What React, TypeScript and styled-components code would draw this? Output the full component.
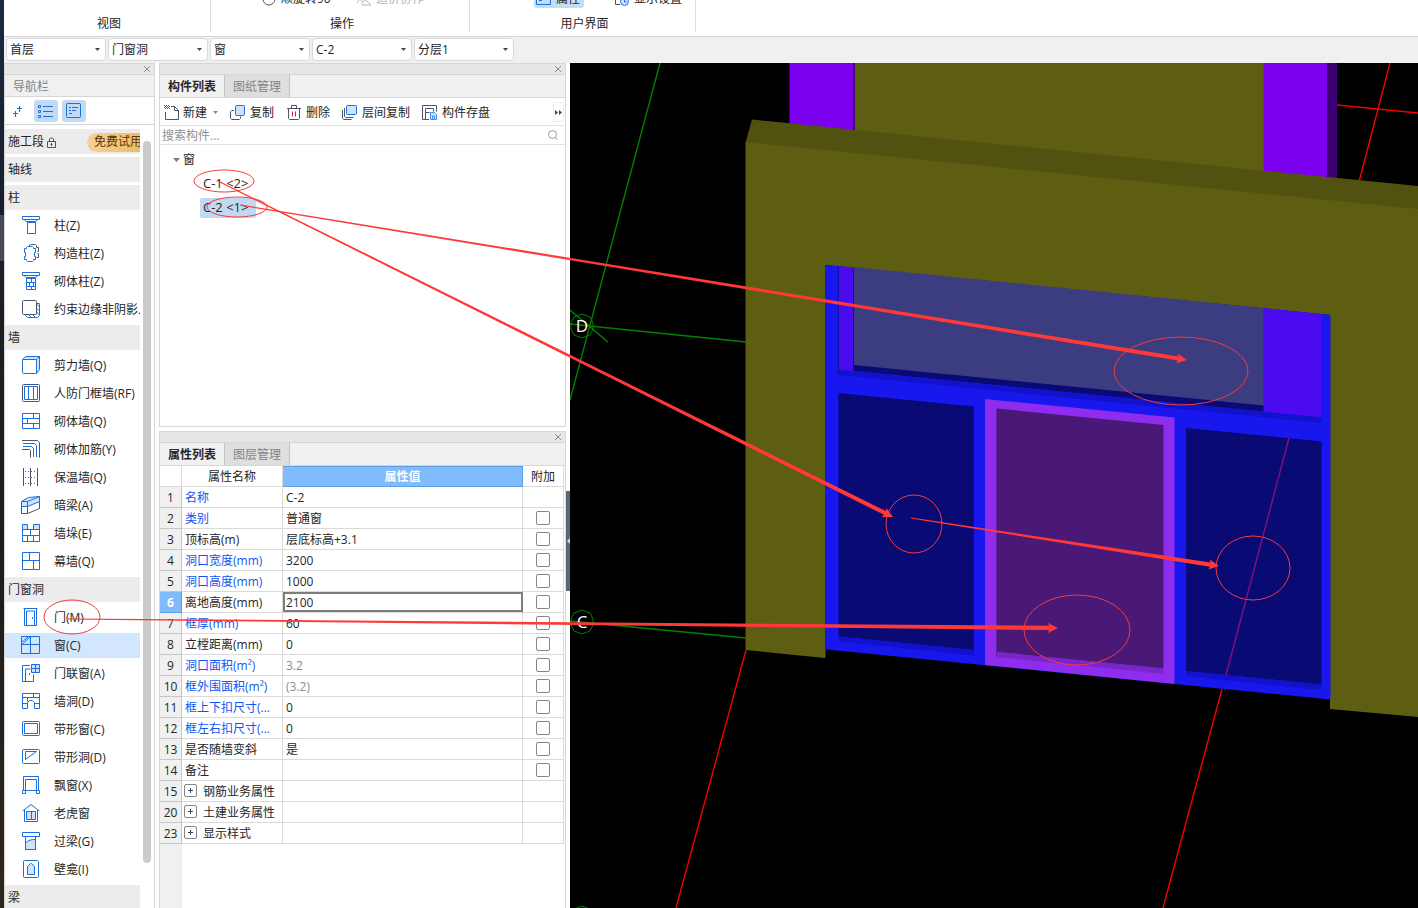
import React from 'react';
import styled, { createGlobalStyle, css } from 'styled-components';

const BLUE = '#1a6fe0';
const SLATE = '#4b566b';
const PALE = '#cfe2fa';
const LINE = '#d6d6d6';
const INK = '#262626';

const GlobalStyle = createGlobalStyle`
  * { box-sizing: border-box; }
  body {
    margin: 0;
    background: #fff;
    overflow: hidden;
  }
  body, button, input, select, table {
    font-family: "Open Sans", "Noto Sans CJK SC", sans-serif;
    font-size: 12px;
    line-height: 18px;
    color: ${INK};
  }
  button {
    border: 0;
    padding: 0;
    background: none;
    white-space: nowrap;
  }
`;

/* ---------- page frame ---------- */

const Page = styled.div`
  position: relative;
  display: flex;
  height: 100vh;
  overflow: hidden;
`;

const DesktopEdge = styled.div`
  flex: none;
  width: 4px;
  background: linear-gradient(#1b2940 0, #161e2c 215px, #454a54 215px, #454a54 261px, #1b2027 261px, #1c1c1c 60%, #30261d 100%);
`;

const Main = styled.div`
  flex: 1;
  min-width: 0;
  display: flex;
  flex-direction: column;
`;

const Workspace = styled.div`
  flex: 1;
  min-height: 0;
  display: flex;
`;

/* ---------- ribbon ---------- */

const Ribbon = styled.header`
  flex: none;
  display: flex;
  height: 37px;
  overflow: hidden;
  border-bottom: 1px solid ${LINE};
  padding-bottom: 4px;
`;

const RibbonGroup = styled.section<{ $width: number; $indent: number }>`
  width: ${p => p.$width}px;
  border-right: 1px solid #dedede;
  display: flex;
  flex-direction: column;
  justify-content: flex-end;
  > div { padding-left: ${p => p.$indent}px; }
`;

const RibbonRow = styled.div<{ $gap: number }>`
  flex: none;
  display: flex;
  gap: ${p => p.$gap}px;
  height: 22px;
`;

const RibbonButton = styled.button<{ $on?: boolean }>`
  display: flex;
  align-items: center;
  gap: 4px;
  height: 22px;
  padding: 4px 4px 0 2px;
  border-radius: 3px;
  ${p => p.$on && css`background: #c5dcf5;`}
  &:disabled { color: #b4b4b4; }
`;

const RibbonLabel = styled.h2`
  flex: none;
  margin: 0;
  padding: 8px 0 0 4px;
  height: 24px;
  font-size: 12px;
  line-height: 16px;
  font-weight: 400;
  text-align: center;
`;

/* ---------- context selectors ---------- */

const ContextBar = styled.div`
  flex: none;
  display: flex;
  gap: 2px;
  height: 26px;
  padding: 1px 0 0 2px;
  background: #f0f0f0;
`;

const SelectBox = styled.div`
  position: relative;
  width: 100px;
  height: 23px;
  svg {
    position: absolute;
    right: 6px;
    top: 10px;
    pointer-events: none;
  }
`;

const Select = styled.select`
  appearance: none;
  width: 100%;
  height: 100%;
  padding: 0 16px 0 3px;
  border: 1px solid #d9d9d9;
  border-radius: 4px;
  background: #fff;
`;

/* ---------- panels ---------- */

const Panel = styled.section<{ $basis?: number }>`
  flex: ${p => (p.$basis ? `0 0 ${p.$basis}px` : '1 1 0')};
  min-height: 0;
  display: flex;
  flex-direction: column;
  overflow: hidden;
  border: 1px solid ${LINE};
  border-top: 0;
  border-bottom-width: ${p => (p.$basis ? 1 : 0)}px;
`;

const GripBar = styled.div`
  flex: none;
  display: flex;
  align-items: center;
  justify-content: flex-end;
  height: 12px;
  padding-right: 3px;
  background: #e7e7e7;
  border-top: 1px solid ${LINE};
  border-bottom: 1px solid ${LINE};
  button { display: flex; }
`;

const NavColumn = styled.nav`
  flex: none;
  width: 151px;
  display: flex;
`;

const NavTitle = styled.h2`
  flex: none;
  margin: 0;
  height: 22px;
  padding: 3px 8px 0;
  font-size: 12px;
  font-weight: 400;
  color: #828282;
  background: #f0f0f0;
  border-bottom: 1px solid ${LINE};
`;

const NavTools = styled.div`
  flex: none;
  display: flex;
  align-items: center;
  gap: 4px;
  height: 28px;
  padding-left: 1px;
  border-bottom: 1px solid ${LINE};
`;

const NavTool = styled.button<{ $on?: boolean }>`
  display: grid;
  place-items: center;
  width: 24px;
  height: 22px;
  border-radius: 3px;
  ${p => p.$on && css`background: #c3daf3;`}
`;

const NavScroll = styled.div`
  flex: 1;
  min-height: 0;
  display: flex;
  gap: 3px;
  padding-top: 4px;
`;

const NavList = styled.div`
  flex: none;
  width: 135px;
  display: flex;
  flex-direction: column;
  gap: 3px;
  overflow: hidden;
`;

const NavHeading = styled.button`
  flex: none;
  display: flex;
  align-items: center;
  gap: 2px;
  height: 25px;
  padding: 1px 0 0 3px;
  background: #ececec;
  text-align: left;
`;

const TrialBadge = styled.span`
  flex: none;
  width: 53px;
  margin-left: auto;
  height: 19px;
  padding-left: 7px;
  border-radius: 10px 0 0 10px;
  background: linear-gradient(90deg, #f6d09c, #ebbe62);
  color: #5b3108;
`;

const NavItem = styled.button<{ $on?: boolean }>`
  flex: none;
  display: flex;
  align-items: center;
  gap: 12px;
  height: 25px;
  padding-left: 16px;
  overflow: hidden;
  text-align: left;
  background: ${p => (p.$on ? '#d2e6fd' : 'transparent')};
  svg { flex: none; }
`;

const ScrollThumb = styled.div`
  width: 8px;
  height: 722px;
  margin-top: 12px;
  border-radius: 4px;
  background: #cbcbcb;
`;

const MiddleColumn = styled.div`
  flex: none;
  display: flex;
  flex-direction: column;
  gap: 4px;
  width: 407px;
  margin-left: 4px;
`;

const TabBar = styled.div`
  flex: none;
  display: flex;
  height: 23px;
  background: #f1f1f1;
  border-bottom: 1px solid ${LINE};
`;

const Tab = styled.button<{ $on?: boolean }>`
  width: 65px;
  height: 22px;
  padding-top: 2px;
  border-right: 1px solid #c4c4c8;
  background: ${p => (p.$on ? '#f1f1f1' : '#dfdfdf')};
  color: ${p => (p.$on ? INK : '#848484')};
  font-weight: ${p => (p.$on ? 700 : 400)};
`;

const ToolRow = styled.div`
  flex: none;
  display: flex;
  align-items: center;
  gap: 12px;
  height: 28px;
  padding: 1px 0 0 4px;
  border-bottom: 1px solid #e2e2e2;
`;

const ToolButton = styled.button<{ $menu?: boolean }>`
  display: flex;
  align-items: center;
  gap: 4px;
  padding-top: 1px;
  ${p => p.$menu && css`
    gap: 3px;
    > svg:last-child { margin-left: 3px; }
  `}
`;

const MoreButton = styled.button`
  display: grid;
  place-items: center;
  width: 11px;
  height: 20px;
  margin: 0 1px 0 auto;
  border: 1px solid #ececec;
  border-radius: 3px;
`;

const SearchRow = styled.label`
  flex: none;
  display: flex;
  align-items: center;
  height: 19px;
  padding: 0 6px 0 2px;
  border-bottom: 1px solid #e2e2e2;
`;

const SearchInput = styled.input`
  flex: 1;
  height: 18px;
  padding: 1px 0 0;
  border: 0;
  outline: 0;
  background: none;
  &::placeholder { color: #8f8f8f; }
`;

const Tree = styled.ul`
  margin: 0;
  padding: 3px 0 0 13px;
  list-style: none;
  ul {
    margin: 0;
    padding: 0 0 0 27px;
    list-style: none;
  }
`;

const TreeRow = styled.div`
  display: flex;
  align-items: center;
  gap: 3px;
  height: 24px;
`;

const TreeLeaf = styled.button<{ $on?: boolean }>`
  height: 20px;
  padding: 0 8px 2px 3px;
  border-radius: 2px;
  font-size: 13px;
  background: ${p => (p.$on ? '#c1d9f2' : 'transparent')};
`;

/* ---------- property grid ---------- */

const Grid = styled.table`
  flex: none;
  table-layout: fixed;
  width: 404px;
  border-collapse: separate;
  border-spacing: 0;
  th, td {
    height: 21px;
    padding: 2px 3px 0;
    overflow: hidden;
    white-space: nowrap;
    font-weight: 400;
    text-align: left;
    border-right: 1px solid #dadada;
    border-bottom: 1px solid #dadada;
  }
  thead th { text-align: center; }
`;

const ValueHead = styled.th`
  && {
    background: #80bbfb;
    color: #fff;
    font-weight: 700;
    border-color: #5b9fe8;
    box-shadow: inset 0 1px #5b9fe8;
  }
`;

const RowNumber = styled.th<{ $on?: boolean }>`
  && {
    padding: 2px 0 0;
    text-align: center;
    background: ${p => (p.$on ? '#80bbfb' : '#f0f0f0')};
    border-color: #c6c6c6;
    ${p => p.$on && css`
      color: #fff;
      font-weight: 700;
      border-color: #5b9fe8;
    `}
  }
`;

const NameCell = styled.td<{ $link?: boolean }>`
  color: ${p => (p.$link ? '#0f55f5' : INK)};
  div { display: flex; gap: 6px; margin-left: -1px; }
`;

const ValueCell = styled.td<{ $muted?: boolean; $edit?: boolean }>`
  color: ${p => (p.$muted ? '#8c8c8c' : INK)};
  && { ${p => p.$edit && 'padding: 0; border-right-color: #7d7d7d;'} }
`;

const ValueInput = styled.input`
  display: block;
  width: 100%;
  height: 20px;
  padding: 0 1px;
  border: 2px solid #7d7d7d;
  border-right-width: 1px;
  outline: 0;
`;

const CheckCell = styled.td`
  && { padding-top: 0; }
  input {
    appearance: none;
    display: block;
    width: 14px;
    height: 14px;
    margin: 0 auto;
    border: 1px solid #858585;
    border-radius: 2px;
    background: #fff;
  }
`;

const Expander = styled.button`
  display: grid;
  place-items: center;
  width: 13px;
  height: 13px;
  margin-top: 1px;
  border: 1px solid #858585;
  border-radius: 2px;
`;

const GridRest = styled.div`
  flex: 1;
  width: 22px;
  background: #f0f0f0;
`;

const Splitter = styled.div`
  flex: none;
  width: 4px;
  padding-top: 428px;
`;

const SplitHandle = styled.button`
  display: grid;
  place-items: center;
  width: 4px;
  height: 100px;
  background: #5c6676;
`;

const Viewport = styled.main`
  flex: 1;
  min-width: 0;
  background: #000;
  overflow: hidden;
  svg {
    display: block;
    width: 100%;
    height: 100%;
  }
`;

const MarkupLayer = styled.svg`
  position: absolute;
  inset: 0;
  width: 100%;
  height: 100%;
  pointer-events: none;
`;

/* ---------- icons ---------- */

const Glyph = ({ size = 21, children }: { size?: number; children: React.ReactNode }) => (
  <svg width={size} height={size} viewBox={`0 0 ${size} ${size}`} fill="none" stroke={BLUE} strokeLinejoin="round" aria-hidden="true">
    {children}
  </svg>
);

const navIcons: Record<string, React.ReactNode> = {
  column: <><path d="M1.5 1.5h17v3h-17z" /><path d="M3.5 4.5l1.5 2h10l1.5-2M6.5 7.500h8v11h-8z" /></>,
  tieColumn: <>
    <path stroke={SLATE} d="M8.500 3v-1l1-.5h5l1 1v2h2v4h-1M15.500 14.500h2v-4h-1" />
    <path d="M5.500 5.500v-1l1-1h5l1 1v1h2v4h-1v4h1v3h-2v1l-1 1h-5l-1-1v-1h-2v-3h1v-4h-1v-4z" />
  </>,
  brickColumn: <path d="M1.500 1.500h17v3h-17zM3.500 4.500l1.500 2h10l1.500-2M5.500 7.500h9v11h-9zM5.500 11.500h9M5.500 15.500h9M10.500 7.500v4M8.500 11.500v4M12.500 11.500v4M10.500 15.500v3" />,
  edge: <>
    <path d="M4.500 16l2 2.500h10l2-2V4.500h-3M8 16l2.500 2.500M12 16l2.500 2.500M15.500 13l3 3M15.500 9l3 3M15.500 5l3 3" />
    <rect x="1.500" y="1.500" width="14" height="14" rx="1" fill="#fff" stroke={SLATE} />
  </>,
  shearWall: <>
    <path fill={PALE} d="M1.500 4.500l3-3h14l-3 3zM15.500 4.500l3-3v13l-3 4z" />
    <rect x="1.500" y="4.500" width="14" height="14" rx="1" fill="#fff" />
  </>,
  blastWall: <><rect x="1.500" y="1.500" width="17" height="17" rx="1" stroke={SLATE} /><path d="M3.500 3.500h13v13h-13zM7.500 3.500v13M12.500 3.500v13" /></>,
  brickWall: <path d="M1.500 2.500h17v15h-17zM1.500 7.500h17M1.500 12.500h17M12.500 2.500v5M6.500 7.500v5M12.500 12.500v5" />,
  rebar: <><path stroke={SLATE} d="M1 1.500h15.500l2 2V18.500M1 10.500h7.500l1 1v7" /><path d="M2 4.500h11.500l2 2V18M2 7.500h8.500l2 2V18" /></>,
  insulation: <><path stroke={SLATE} d="M2.500 1v18M9.500 1v18M16.500 1v18" /><path strokeDasharray="1 2" d="M4 4.500h13M4 10.500h13M4 16.500h13" /></>,
  hiddenBeam: <>
    <path fill={PALE} d="M.5 6.500l7-4 11-1v5l-12 5h-6z" />
    <path d="M.5 6.500h6l12-5M6.500 6.500v5" />
    <path stroke={SLATE} d="M.5 11.500v7h6l12-5v-7M6.500 11.500v7" />
  </>,
  pier: <><path fill={PALE} d="M1.500 1.500h5v5h-5zM12.500 1.500h6v5h-6z" /><path d="M1.500 6.500h17v12h-17zM1.500 12.500h17M9.500 6.500v6M6.500 12.500v6M12.500 12.500v6" /></>,
  curtain: <path d="M1.500 1.500h17v17h-17zM1.500 9.500h17M8.500 1.500v8M12.500 9.500v9" />,
  door: <><path d="M2.500 1.500h14M3.500 1.500v17h12v-17M5.500 18v-14h8v14M11.500 10v2" /></>,
  window: <><path fill={PALE} stroke="none" d="M1 1h9v9h-9z" /><path d="M.5 1.500h18v17h-18zM.5 9.500h18M9.500 1.500v17M1 7l6-5M1 9.500l8.500-8" /></>,
  doorWindow: <><path d="M9 2.500h-7.500v16h11v-7M4.500 18v-12h5M8.500 10v2" /><path fill={PALE} d="M10.500 1.500h8v8h-8zM10.500 5.500h8M14.500 1.500v8" /></>,
  wallHole: <path d="M1.500 2.500h17v15h-5v-6l-2-2h-3l-2 2v6h-5zM1.500 6.500h17M12.500 2.500v4M1.500 12.500h5M13.500 12.500h5M6.500 6.500v4" />,
  stripWindow: <><rect x="1.500" y="2.500" width="17" height="14" rx="1" /><path d="M3.500 4.500h13v10h-13z" /></>,
  stripHole: <><rect x="1.500" y="2.500" width="17" height="14" rx="1" /><path d="M4.500 4.500h11l-11 8z" /></>,
  bay: <><path d="M2.500 15v-13.500h15v13.500M4.500 15.500v-11h11v11M4.500 15.500h11" /><path d="M1.500 15.500h3v3h-3zM15.500 15.500h3v3h-3z" /></>,
  dormer: <><path d="M1.500 8l8.500-6.500 8.500 6.500M3.500 7v11.500h13v-11.500" /><path fill={PALE} d="M5.500 8.500h9v8h-9zM10.500 8.500v8" /></>,
  lintel: <><path fill={PALE} d="M4.500 12c3-3 6-3.500 10-3.500v10h-10z" /><path d="M1.500 1.500h17v4h-17zM4.500 5.500v13h10v-13" /></>,
  niche: <><rect x="2.500" y="1.500" width="15" height="17" rx="1" /><path fill={PALE} d="M6.500 15.500v-8l3-3h1l3 3v8z" /></>,
};

const CloseIcon = () => (
  <svg width="8" height="8" viewBox="0 0 8 8" stroke="#8e8e8e" aria-hidden="true"><path d="M1 1l6 6M7 1l-6 6" /></svg>
);

const Caret = ({ color = '#404858' }: { color?: string }) => (
  <svg width="5" height="3" viewBox="0 0 5 3" fill={color} aria-hidden="true"><path d="M0 0h5L2.500 3z" /></svg>
);

const NewIcon = () => (
  <Glyph size={16}>
    <path stroke={SLATE} d="M1.500 7v7.500h13v-9l-4-4H7M10.500 1.500v4h4" />
    <path strokeDasharray="1 1" d="M0 .5h5M1 1.500h5M0 2.500h5M1 3.500h5" />
  </Glyph>
);
const CopyIcon = () => (
  <Glyph size={16}>
    <path stroke={SLATE} d="M4 5.500h-2.500l-1 1v7l1 1h8l1-1v-2" />
    <rect x="5.500" y=".5" width="9" height="10" rx="1" fill={PALE} />
  </Glyph>
);
const DeleteIcon = () => (
  <Glyph size={16}>
    <path stroke={SLATE} d="M1 3.500h14M5.500 3v-2.500h5v2.500M2.500 4v9.500l1 1h9l1-1V4" />
    <path stroke="#e0202a" d="M6.500 6.500v5M9.500 6.500v5" />
  </Glyph>
);
const LayerCopyIcon = () => (
  <Glyph size={16}>
    <path stroke={SLATE} d="M.5 5v8.500l1 1h8M2.500 3v8.500l1 1h8" />
    <rect x="4.500" y=".5" width="10" height="9" rx="1" fill={PALE} />
  </Glyph>
);
const StoreIcon = () => (
  <Glyph size={16}>
    <path stroke={SLATE} d="M7 14.500h-6.500v-14h14v6M3.500 14v-10.500h8M3.500 7.500h4M11.500 3.500v3" />
    <path fill={PALE} stroke="#4c8fe8" d="M8.500 7.500h4l2 2v5h-6zM10.500 14v-3h2v3" />
  </Glyph>
);

/* ---------- data ---------- */

type NavEntry = { text: string; icon?: string; locked?: boolean; on?: boolean };

const navEntries: NavEntry[] = [
  { text: '施工段', locked: true },
  { text: '轴线' },
  { text: '柱' },
  { text: '柱(Z)', icon: 'column' },
  { text: '构造柱(Z)', icon: 'tieColumn' },
  { text: '砌体柱(Z)', icon: 'brickColumn' },
  { text: '约束边缘非阴影...', icon: 'edge' },
  { text: '墙' },
  { text: '剪力墙(Q)', icon: 'shearWall' },
  { text: '人防门框墙(RF)', icon: 'blastWall' },
  { text: '砌体墙(Q)', icon: 'brickWall' },
  { text: '砌体加筋(Y)', icon: 'rebar' },
  { text: '保温墙(Q)', icon: 'insulation' },
  { text: '暗梁(A)', icon: 'hiddenBeam' },
  { text: '墙垛(E)', icon: 'pier' },
  { text: '幕墙(Q)', icon: 'curtain' },
  { text: '门窗洞' },
  { text: '门(M)', icon: 'door' },
  { text: '窗(C)', icon: 'window', on: true },
  { text: '门联窗(A)', icon: 'doorWindow' },
  { text: '墙洞(D)', icon: 'wallHole' },
  { text: '带形窗(C)', icon: 'stripWindow' },
  { text: '带形洞(D)', icon: 'stripHole' },
  { text: '飘窗(X)', icon: 'bay' },
  { text: '老虎窗', icon: 'dormer' },
  { text: '过梁(G)', icon: 'lintel' },
  { text: '壁龛(I)', icon: 'niche' },
  { text: '梁' },
];

type Prop = { n: number; name: string; value?: string; link?: boolean; muted?: boolean; check?: boolean; group?: boolean; edit?: boolean };

const props: Prop[] = [
  { n: 1, name: '名称', value: 'C-2', link: true },
  { n: 2, name: '类别', value: '普通窗', link: true, check: true },
  { n: 3, name: '顶标高(m)', value: '层底标高+3.1', check: true },
  { n: 4, name: '洞口宽度(mm)', value: '3200', link: true, check: true },
  { n: 5, name: '洞口高度(mm)', value: '1000', link: true, check: true },
  { n: 6, name: '离地高度(mm)', value: '2100', check: true, edit: true },
  { n: 7, name: '框厚(mm)', value: '60', link: true, check: true },
  { n: 8, name: '立樘距离(mm)', value: '0', check: true },
  { n: 9, name: '洞口面积(m²)', value: '3.2', link: true, muted: true, check: true },
  { n: 10, name: '框外围面积(m²)', value: '(3.2)', link: true, muted: true, check: true },
  { n: 11, name: '框上下扣尺寸(...', value: '0', link: true, check: true },
  { n: 12, name: '框左右扣尺寸(...', value: '0', link: true, check: true },
  { n: 13, name: '是否随墙变斜', value: '是', check: true },
  { n: 14, name: '备注', check: true },
  { n: 15, name: '钢筋业务属性', group: true },
  { n: 20, name: '土建业务属性', group: true },
  { n: 23, name: '显示样式', group: true },
];

const selectors = [
  ['楼层', '首层'],
  ['构件分类', '门窗洞'],
  ['构件类型', '窗'],
  ['构件', 'C-2'],
  ['分层', '分层1'],
];

/* ---------- 3D scene ---------- */

const AxisBubble = ({ x, y, label }: { x: number; y: number; label?: string }) => (
  <>
    <path d={`M${x} ${y - 12}l8 3 3 6v6l-3 6-8 3-8-3-3-6v-6l3-6z`} fill="none" stroke="#008200" />
    {label && <text x={x} y={y + 6} fill="#fff" fontSize="17" textAnchor="middle">{label}</text>}
  </>
);

const Scene = () => (
  <svg role="img" aria-label="三维视图">
    <g transform="translate(-570 -63)">
      <g stroke="#008200" strokeWidth="1.4" fill="none">
        <path d="M660 63L570 400M570 324L746 342M570 310L608 342M570 621L746 638" />
      </g>
      <AxisBubble x={582} y={326} label="D" />
      <AxisBubble x={582} y={622} label="C" />
      <AxisBubble x={582} y={918} />
      <path d="M1390 63L1359 182M1337 105L1418 113M746 650L676 908M1222 689L1163 908" stroke="#f00000" strokeWidth="1.4" fill="none" />

      <path fill="#7b00f0" d="M789.500 63H854v70h-64.500zM1263 63h64v120h-64z" />
      <path fill="#3c0074" d="M853 63h2v70h-2zM1327 63h10v120h-10z" />
      <path fill="#5e5e12" d="M855 63h408.500v120H855z" />
      <path fill="#525210" d="M752 119.500L1418 186v24L745.500 143z" />
      <path fill="#5e5e12" d="M745.500 142L1418 209v508l-88-8V315L825 265v393l-79.500-8z" />

      <path fill="#1717ee" d="M826 265l504.500 50v384.500L826 649.500z" />
      <path fill="#4a0bee" d="M839 266l15 1.500v103.500l-15-1.500zM1263.500 308l58 6V417.500l-58-5.500z" />
      <path fill="#3c3c80" d="M854 267l409.500 41v98L854 365.500z" />
      <path fill="#0a0a74" d="M854 365l409.500 40.500v6L854 371z" />
      <path fill="#1212cc" d="M838.500 370L1321.500 417.500v5.500L838.500 375z" />
      <path stroke="#1010a0" d="M838.500 266v108M853.500 268v103" fill="none" />
      <path stroke="#34340c" d="M825.500 265v392" fill="none" />

      <path fill="#0a0a74" d="M838.500 393L974 406.500V650L838.500 636.500zM1186 428l135.500 13.500V684.500L1186 671z" />
      <path fill="#1212cc" d="M838.500 636.500L974 650v5.500L838.500 641.500zM1186 671l135.500 13.500v5.500L1186 676z" />
      <path fill="#8f2dee" d="M985 399l189.500 18.500V684L985 665z" />
      <path fill="#4a1877" d="M996.500 408.500L1163.500 425V668.500L996.500 652z" />
      <path fill="#7a25cc" d="M996.500 652L1163.500 668.500v5.500L996.500 657z" />
      <path d="M996.500 409v247" stroke="#65209f" />
      <path d="M1289 438L1226 675" stroke="#85107c" strokeWidth="1.4" />
    </g>
  </svg>
);

/* ---------- red markup ---------- */

const ellipses = [
  [224, 181, 30, 11],
  [237, 207, 30, 10],
  [72, 617, 28, 17],
  [1181, 371, 67, 34],
  [914, 524, 28, 29],
  [1253, 568, 37, 32],
  [1077, 630, 53, 35],
];

const arrows = [
  [218, 181, 893, 517],
  [240, 205, 1187, 360],
  [67, 619, 1058, 628],
  [911, 518, 1219, 566],
];

const arrowPoints = ([x1, y1, x2, y2]: number[]) => {
  const len = Math.hypot(x2 - x1, y2 - y1);
  const ux = (x2 - x1) / len;
  const uy = (y2 - y1) / len;
  const at = (along: number, side: number) => `${x1 + ux * along - uy * side},${y1 + uy * along + ux * side}`;
  return [at(0, 0.6), at(len - 9, 2.1), at(len - 10, 5), at(len, 0), at(len - 10, -5), at(len - 9, -2.1), at(0, -0.6)].join(' ');
};

const Markup = () => (
  <MarkupLayer aria-hidden="true">
    {ellipses.map(([cx, cy, rx, ry]) => (
      <ellipse key={`${cx}-${cy}`} cx={cx} cy={cy} rx={rx} ry={ry} fill="none" stroke="#f23c3c" />
    ))}
    {arrows.map(a => <polygon key={a.join('-')} points={arrowPoints(a)} fill="#ff3838" />)}
  </MarkupLayer>
);

/* ---------- page ---------- */

const Grip = () => (
  <GripBar><button aria-label="关闭"><CloseIcon /></button></GripBar>
);

export default function App() {
  return (
    <Page>
      <GlobalStyle />
      <DesktopEdge />
      <Main>
        <Ribbon>
          <RibbonGroup $width={207} $indent={0}>
            <RibbonLabel>视图</RibbonLabel>
          </RibbonGroup>
          <RibbonGroup $width={259} $indent={48}>
            <RibbonRow $gap={14}>
              <RibbonButton>
                <Glyph size={16}><circle cx="8" cy="8" r="6" stroke={SLATE} /></Glyph>顺旋转90°
              </RibbonButton>
              <RibbonButton disabled>
                <Glyph size={16}><path stroke="#b8b8b8" d="M1 12c1-4 5-4 6-1M6 14c0-4 3-5 5-4l4 4H6zM9 9l4-3 2 3" /></Glyph>造价协作
              </RibbonButton>
            </RibbonRow>
            <RibbonLabel>操作</RibbonLabel>
          </RibbonGroup>
          <RibbonGroup $width={226} $indent={64}>
            <RibbonRow $gap={28}>
              <RibbonButton $on>
                <Glyph size={16}><path d="M.5 1.500h14v12H.5zM3 5.500h5M3 9.500h3" /></Glyph>属性
              </RibbonButton>
              <RibbonButton>
                <Glyph size={16}><path stroke={SLATE} d="M6 13.500H1.500v-12h12v4" /><circle cx="10.500" cy="10.500" r="4" fill={PALE} /><path d="M10.500 8v3h2" /></Glyph>显示设置
              </RibbonButton>
            </RibbonRow>
            <RibbonLabel>用户界面</RibbonLabel>
          </RibbonGroup>
        </Ribbon>

        <ContextBar>
          {selectors.map(([label, value]) => (
            <SelectBox key={label}>
              <Select aria-label={label} defaultValue={value}><option>{value}</option></Select>
              <Caret />
            </SelectBox>
          ))}
        </ContextBar>

        <Workspace>
          <NavColumn>
            <Panel>
              <Grip />
              <NavTitle>导航栏</NavTitle>
              <NavTools>
                <NavTool aria-label="添加">
                  <Glyph size={12}><path d="M7.500 1v6M5 3.500h5M3.500 6v6M1 8.500h5" /></Glyph>
                </NavTool>
                <NavTool $on aria-label="列表">
                  <Glyph size={16}><path d="M5 3.500h10M5 8.500h10M5 13.500h10M.5 2.500h2v2h-2zM.5 7.500h2v2h-2zM.5 12.500h2v2h-2z" /></Glyph>
                </NavTool>
                <NavTool $on aria-label="详情">
                  <Glyph size={16}><rect x=".5" y=".5" width="14" height="14" rx="1" /><path d="M3 4.500h2M6 4.500h6M3 7.500h2M6 7.500h4M3 10.500h3" /></Glyph>
                </NavTool>
              </NavTools>
              <NavScroll>
                <NavList>
                  {navEntries.map(e => e.icon ? (
                    <NavItem key={e.text} $on={e.on}><Glyph>{navIcons[e.icon]}</Glyph>{e.text}</NavItem>
                  ) : (
                    <NavHeading key={e.text}>
                      {e.text}
                      {e.locked && (
                        <>
                          <Glyph size={11}><path stroke={SLATE} d="M1.500 4.500h8v6h-8zM3.500 4v-2l1-1h2l1 1v2M5.500 6v3M4.500 7.500h2" /></Glyph>
                          <TrialBadge>免费试用</TrialBadge>
                        </>
                      )}
                    </NavHeading>
                  ))}
                </NavList>
                <ScrollThumb />
              </NavScroll>
            </Panel>
          </NavColumn>

          <MiddleColumn>
            <Panel $basis={364}>
              <Grip />
              <TabBar>
                <Tab $on>构件列表</Tab>
                <Tab>图纸管理</Tab>
              </TabBar>
              <ToolRow>
                <ToolButton $menu><NewIcon />新建<Caret color="#8a8a8a" /></ToolButton>
                <ToolButton><CopyIcon />复制</ToolButton>
                <ToolButton><DeleteIcon />删除</ToolButton>
                <ToolButton><LayerCopyIcon />层间复制</ToolButton>
                <ToolButton><StoreIcon />构件存盘</ToolButton>
                <MoreButton aria-label="更多">
                  <svg width="7" height="5" viewBox="0 0 7 5" fill="#404858" aria-hidden="true"><path d="M0 0l3 2.500L0 5zM4 0l3 2.500L4 5z" /></svg>
                </MoreButton>
              </ToolRow>
              <SearchRow>
                <SearchInput type="text" aria-label="搜索构件" placeholder="搜索构件..." />
                <svg width="12" height="12" viewBox="0 0 12 12" fill="none" stroke="#9a9a9a" aria-hidden="true"><circle cx="5.500" cy="5.500" r="4" /><path d="M8.500 8.500l2 2" /></svg>
              </SearchRow>
              <Tree>
                <li>
                  <TreeRow>
                    <svg width="7" height="4" viewBox="0 0 7 4" fill="#7c7c7c" aria-hidden="true"><path d="M0 0h7L3.500 4z" /></svg>窗
                  </TreeRow>
                  <ul>
                    <li><TreeRow><TreeLeaf>C-1 &lt;2&gt;</TreeLeaf></TreeRow></li>
                    <li><TreeRow><TreeLeaf $on>C-2 &lt;1&gt;</TreeLeaf></TreeRow></li>
                  </ul>
                </li>
              </Tree>
            </Panel>

            <Panel>
              <Grip />
              <TabBar>
                <Tab $on>属性列表</Tab>
                <Tab>图层管理</Tab>
              </TabBar>
              <Grid>
                <colgroup>
                  <col width="22" />
                  <col width="101" />
                  <col width="240" />
                  <col width="41" />
                </colgroup>
                <thead>
                  <tr><th /><th>属性名称</th><ValueHead>属性值</ValueHead><th>附加</th></tr>
                </thead>
                <tbody>
                  {props.map(p => (
                    <tr key={p.n}>
                      <RowNumber $on={p.edit}>{p.n}</RowNumber>
                      <NameCell $link={p.link}>
                        {p.group ? (
                          <div>
                            <Expander aria-label={`展开${p.name}`}>
                              <svg width="5" height="5" viewBox="0 0 5 5" stroke="#404858" aria-hidden="true"><path d="M0 2.500h5M2.500 0v5" /></svg>
                            </Expander>
                            {p.name}
                          </div>
                        ) : p.name}
                      </NameCell>
                      <ValueCell $muted={p.muted} $edit={p.edit}>
                        {p.edit ? <ValueInput aria-label={p.name} defaultValue={p.value} /> : p.value}
                      </ValueCell>
                      <CheckCell>{p.check && <input type="checkbox" aria-label={`附加${p.name}`} />}</CheckCell>
                    </tr>
                  ))}
                </tbody>
              </Grid>
              <GridRest />
            </Panel>
          </MiddleColumn>

          <Splitter>
            <SplitHandle aria-label="折叠面板">
              <svg width="3" height="6" viewBox="0 0 3 6" fill="#d8dce2" aria-hidden="true"><path d="M3 0v6L0 3z" /></svg>
            </SplitHandle>
          </Splitter>

          <Viewport><Scene /></Viewport>
        </Workspace>
      </Main>
      <Markup />
    </Page>
  );
}
